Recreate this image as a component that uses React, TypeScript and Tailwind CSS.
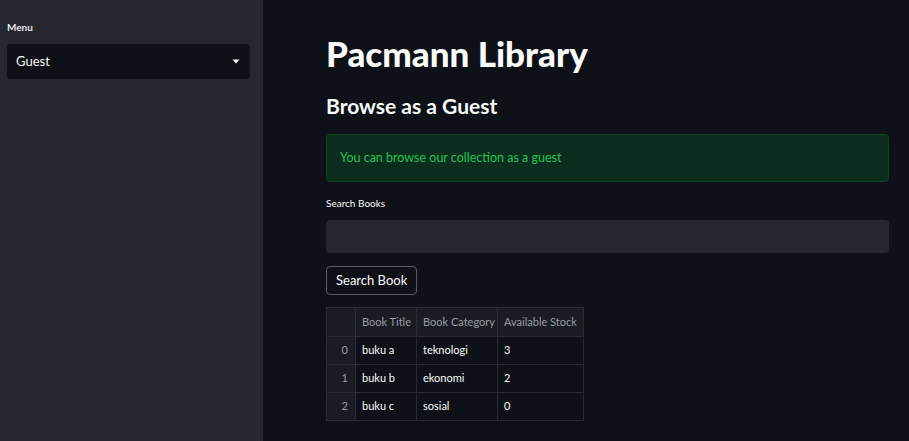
const rows = [
	{ idx: 0, title: 'buku a', category: 'teknologi', stock: 3 },
	{ idx: 1, title: 'buku b', category: 'ekonomi', stock: 2 },
	{ idx: 2, title: 'buku c', category: 'sosial', stock: 0 },
];

export default function App() {
	return (
		<div className="flex w-[909px] h-[441px] overflow-hidden bg-[#0e1117] text-white font-['Lato','Noto_Sans',sans-serif]">
			<aside className="w-[263px] shrink-0 h-full bg-[#262730] px-[7px] pt-[21px]">
				<p className="text-[10px] font-semibold leading-[12px] text-[#fafafa]">Menu</p>
				<div className="mt-[11px] w-[243px] h-[35px] rounded-[4px] bg-[#0e1117] flex items-center justify-between pl-[9px] pr-[8px]">
					<span className="text-[13px] text-[#fafafa]">Guest</span>
					<svg width="8" height="5" viewBox="0 0 8 5" className="mr-[2px]">
						<path d="M0.5 0.5 L7.5 0.5 L4 4.5 Z" fill="#fafafa" />
					</svg>
				</div>
			</aside>
			<main className="flex-1 pl-[63px] pr-[20px] pt-[33px]">
				<h1 className="text-[35px] font-black leading-[40px] text-[#fafafa]">Pacmann Library</h1>
				<h2 className="mt-[19px] text-[21px] font-bold leading-[28px] text-[#fafafa]">Browse as a Guest</h2>
				<div className="mt-[14px] w-[563px] h-[48px] rounded-[4px] bg-[#0d2d1e] border border-[#10421f] flex items-center px-[13px]">
					<span className="text-[12.5px] text-[#21c354]">You can browse our collection as a guest</span>
				</div>
				<p className="mt-[14px] text-[10px] leading-[14px] text-[#fafafa]">Search Books</p>
				<div className="mt-[10px] w-[563px] h-[33px] rounded-[4px] bg-[#262730]" />
				<button className="mt-[13px] h-[29px] px-[9px] rounded-[4px] border border-[#5a5b63] bg-[#0e1117] text-[13px] text-[#fafafa]">
					Search Book
				</button>
				<table className="mt-[12px] table-fixed w-[257px] border-collapse border border-[#2a2c35] text-[11px] whitespace-nowrap">
					<colgroup>
						<col className="w-[29px]" />
						<col className="w-[61px]" />
						<col className="w-[81px]" />
						<col className="w-[86px]" />
					</colgroup>
					<thead>
						<tr className="h-[29px] bg-[#1a1c24]">
							<th className="border border-[#2a2c35]" />
							<th className="border border-[#2a2c35] px-[6px] text-left font-normal text-[#9a9ca4]">Book Title</th>
							<th className="border border-[#2a2c35] px-[6px] text-left font-normal text-[#9a9ca4]">Book Category</th>
							<th className="border border-[#2a2c35] px-[6px] text-left font-normal text-[#9a9ca4]">Available Stock</th>
						</tr>
					</thead>
					<tbody>
						{rows.map((r) => (
							<tr key={r.idx} className="h-[28px]">
								<td className="border border-[#2a2c35] bg-[#1a1c24] pr-[7px] text-right text-[#9a9ca4]">{r.idx}</td>
								<td className="border border-[#2a2c35] px-[6px] text-[#fafafa]">{r.title}</td>
								<td className="border border-[#2a2c35] px-[6px] text-[#fafafa]">{r.category}</td>
								<td className="border border-[#2a2c35] px-[6px] text-[#fafafa]">{r.stock}</td>
							</tr>
						))}
					</tbody>
				</table>
			</main>
		</div>
	);
}
